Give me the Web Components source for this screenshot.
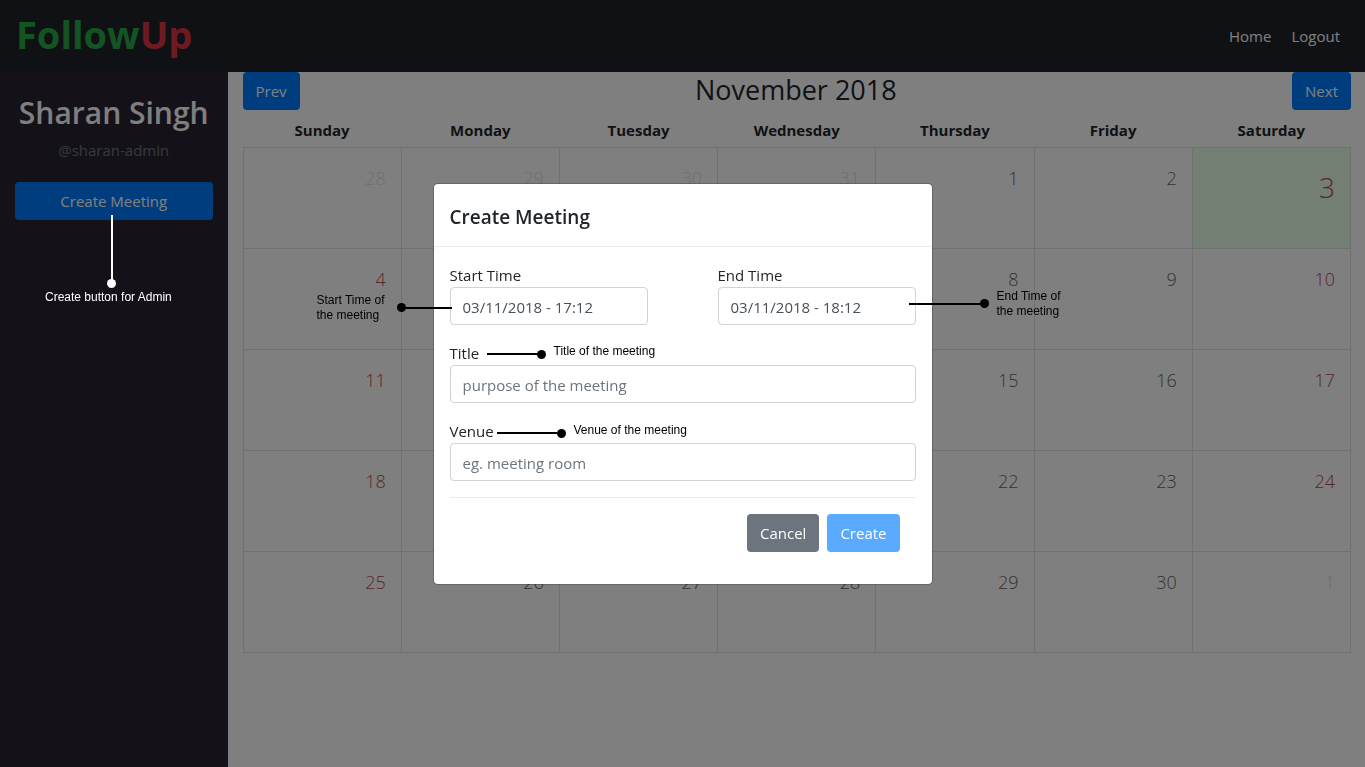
<!DOCTYPE html>
<html lang="en">
<head>
<meta charset="utf-8">
<meta name="viewport" content="width=device-width, initial-scale=1">
<title>FollowUp</title>
<style>
  body {
    margin: 0;
    font: 15px/24px "Open Sans", "Noto Sans", sans-serif;
    color: #212529;
    background: #fff;
  }
</style>
</head>
<body>
<follow-app></follow-app>

<script>
const define = (name, html, setup) => {
  const template = document.createElement('template');
  template.innerHTML = html;
  customElements.define(name, class extends HTMLElement {
    connectedCallback() {
      if (this.shadowRoot) return;
      this.attachShadow({ mode: 'open' }).append(template.content.cloneNode(true));
      if (setup) setup(this, this.shadowRoot);
    }
  });
};

/* Button in the primary, secondary or muted colour */
define('app-button', `
  <style>
    :host { display: inline-block; }
    button {
      width: 100%; height: 38px; padding: 0 12px; border: 1px solid transparent;
      border-radius: 4px; background: #007bff; color: #fff; font: inherit;
      background-clip: border-box; background-origin: border-box;
    }
    :host([kind="secondary"]) button { background-color: #6c757d; }
    button:disabled { background-color: #5aaaff; }
  </style>
  <button type="button"><slot></slot></button>`,
  (host, root) => { root.querySelector('button').disabled = host.hasAttribute('disabled'); });

/* Note with a leader line that ends in a dot */
define('call-out', `
  <style>
    :host {
      display: flex; position: absolute; z-index: 20; align-items: center; gap: 8px;
      font: 12px/15px "Liberation Sans", Arial, sans-serif; color: #000; white-space: nowrap;
    }
    .leader { display: flex; align-items: center; flex: none; width: var(--length, 60px); }
    .line { flex: 1; height: 2px; background: currentColor; margin-right: -2px; }
    .dot { width: 9px; height: 9px; border-radius: 50%; background: currentColor; }
    :host([side="left"]) { flex-direction: row-reverse; gap: 12px; }
    :host([side="left"]) .leader { flex-direction: row-reverse; }
    :host([side="left"]) .line { margin: 0 0 0 -2px; }
    :host([side="below"]) { flex-direction: column; align-items: flex-start; gap: 2px; color: #fff; }
    :host([side="below"]) .leader { flex-direction: column; width: auto; height: var(--length); margin-left: 62px; }
    :host([side="below"]) .line { width: 2px; margin: 0 0 -2px; }
    :host([single]) { align-items: flex-end; }
  </style>
  <div class="leader"><div class="line"></div><div class="dot"></div></div>
  <div><slot></slot></div>`);

define('top-bar', `
  <style>
    :host {
      display: flex; justify-content: space-between; align-items: center;
      height: 72px; padding: 0 25px 0 16px; background: #212328;
    }
    .brand {
      align-self: flex-start; padding-top: 6px;
      font-size: 38px; line-height: 56px; font-weight: 700; text-decoration: none; color: #28a745;
    }
    .brand span { color: #dc3545; }
    nav { display: flex; gap: 20px; }
    nav a { color: #fff; text-decoration: none; }
  </style>
  <a class="brand" href="#">Follow<span>Up</span></a>
  <nav><a href="#home">Home</a><a href="#logout">Logout</a></nav>`);

define('side-bar', `
  <style>
    :host { display: block; padding: 22px 15px; background: #282430; text-align: center; }
    h2 { margin: 0 0 6px; font-size: 30px; line-height: 38px; font-weight: 600; color: #fff; white-space: nowrap; }
    p { margin: 0 0 20px; color: #6c757d; }
    .action { position: relative; }
    app-button { display: block; }
    call-out { left: 30px; top: 33px; --length: 73px; }
  </style>
  <h2>Sharan Singh</h2>
  <p>@sharan-admin</p>
  <div class="action">
    <app-button>Create Meeting</app-button>
    <call-out side="below">Create button for Admin</call-out>
  </div>`);

define('month-calendar', `
  <style>
    :host { display: block; padding: 0 14px 0 15px; }
    header { display: flex; justify-content: space-between; }
    h3 { margin: 0; font-size: 27px; line-height: 36px; font-weight: 500; }
    table { width: 100%; border-collapse: collapse; table-layout: fixed; }
    th { height: 24px; padding: 8px 0 5px; font-weight: 700; }
    td {
      box-sizing: border-box; height: 101px; padding: 18px 15px; border: 1px solid #dee2e6;
      text-align: right; vertical-align: top; font-size: 18px; line-height: 24px; font-weight: 300; color: #666;
    }
    td.weekend { color: #b84c4c; }
    td.other { color: #eadcdc; }
    td.today { background: #e6ffe6; font-size: 28px; line-height: 42px; }
  </style>
  <header>
    <app-button>Prev</app-button>
    <h3>November 2018</h3>
    <app-button>Next</app-button>
  </header>
  <table>
    <thead><tr></tr></thead>
    <tbody></tbody>
  </table>`,
  (host, root) => {
    const days = ['Sunday', 'Monday', 'Tuesday', 'Wednesday', 'Thursday', 'Friday', 'Saturday'];
    root.querySelector('thead tr').innerHTML = days.map(d => `<th scope="col">${d}</th>`).join('');
    const first = new Date(2018, 10, 1).getDay();
    let rows = '';
    for (let week = 0; week < 5; week++) {
      rows += '<tr>';
      for (let day = 0; day < 7; day++) {
        const date = new Date(2018, 10, 1 - first + week * 7 + day);
        const kinds = [];
        if (date.getMonth() !== 10) kinds.push('other');
        else {
          if (day === 0 || day === 6) kinds.push('weekend');
          if (date.getDate() === 3) kinds.push('today');
        }
        rows += `<td class="${kinds.join(' ')}">${date.getDate()}</td>`;
      }
      rows += '</tr>';
    }
    root.querySelector('tbody').innerHTML = rows;
  });

/* Label and text box, with room for a note laid over them */
define('text-field', `
  <style>
    :host { display: block; position: relative; }
    label { display: block; }
    input {
      display: block; box-sizing: border-box; width: 100%; height: 38px; padding: 2px 12px 0;
      border: 1px solid #ced4da; border-radius: 4px; background: #fff; color: #495057; font: inherit;
    }
    input::placeholder { color: #6c757d; opacity: 1; }
  </style>
  <label for="box"></label>
  <input id="box" type="text">
  <slot></slot>`,
  (host, root) => {
    const box = root.querySelector('input');
    root.querySelector('label').textContent = host.getAttribute('label');
    box.value = host.getAttribute('value') || '';
    box.placeholder = host.getAttribute('placeholder') || '';
  });

define('meeting-dialog', `
  <style>
    :host {
      display: flex; position: fixed; inset: 0; z-index: 10; align-items: center; justify-content: center;
      background: rgba(0, 0, 0, .5);
    }
    form {
      box-sizing: border-box; width: 500px; max-width: 100%; border: 1px solid rgba(0, 0, 0, .2);
      border-radius: 5px; background: #fff; background-clip: padding-box;
    }
    h5 {
      margin: 0; padding: 18px 16px 14px; border-bottom: 1px solid #e9ecef;
      font-size: 19px; line-height: 30px; font-weight: 600;
    }
    .fields { display: grid; gap: 16px; padding: 16px; }
    .times { display: flex; justify-content: space-between; gap: 16px; }
    .times text-field { width: 198px; }
    footer {
      display: flex; justify-content: flex-end; gap: 8px;
      margin: 0 16px 16px; padding: 16px; border-top: 1px solid #e9ecef;
    }
    .start { right: 196px; top: 30px; --length: 55px; }
    .end { left: 191px; top: 26px; --length: 80px; }
    .title { left: 37px; top: 3px; --length: 59px; }
    .venue { left: 47px; top: 4px; --length: 69px; }
  </style>
  <form role="dialog" aria-labelledby="heading">
    <h5 id="heading">Create Meeting</h5>
    <div class="fields">
      <div class="times">
        <text-field label="Start Time" value="03/11/2018 - 17:12">
          <call-out class="start" side="left">Start Time of<br>the meeting</call-out>
        </text-field>
        <text-field label="End Time" value="03/11/2018 - 18:12">
          <call-out class="end">End Time of<br>the meeting</call-out>
        </text-field>
      </div>
      <text-field label="Title" placeholder="purpose of the meeting">
        <call-out class="title" single>Title of the meeting</call-out>
      </text-field>
      <text-field label="Venue" placeholder="eg. meeting room">
        <call-out class="venue" single>Venue of the meeting</call-out>
      </text-field>
    </div>
    <footer>
      <app-button kind="secondary">Cancel</app-button>
      <app-button disabled>Create</app-button>
    </footer>
  </form>`);

define('follow-app', `
  <style>
    :host { display: flex; flex-direction: column; min-height: 100vh; }
    main { display: grid; flex: 1; grid-template-columns: 1fr 5fr; }
    side-bar, month-calendar { min-width: 0; }
  </style>
  <top-bar></top-bar>
  <main>
    <side-bar></side-bar>
    <month-calendar></month-calendar>
  </main>
  <meeting-dialog></meeting-dialog>`);
</script>
</body>
</html>
